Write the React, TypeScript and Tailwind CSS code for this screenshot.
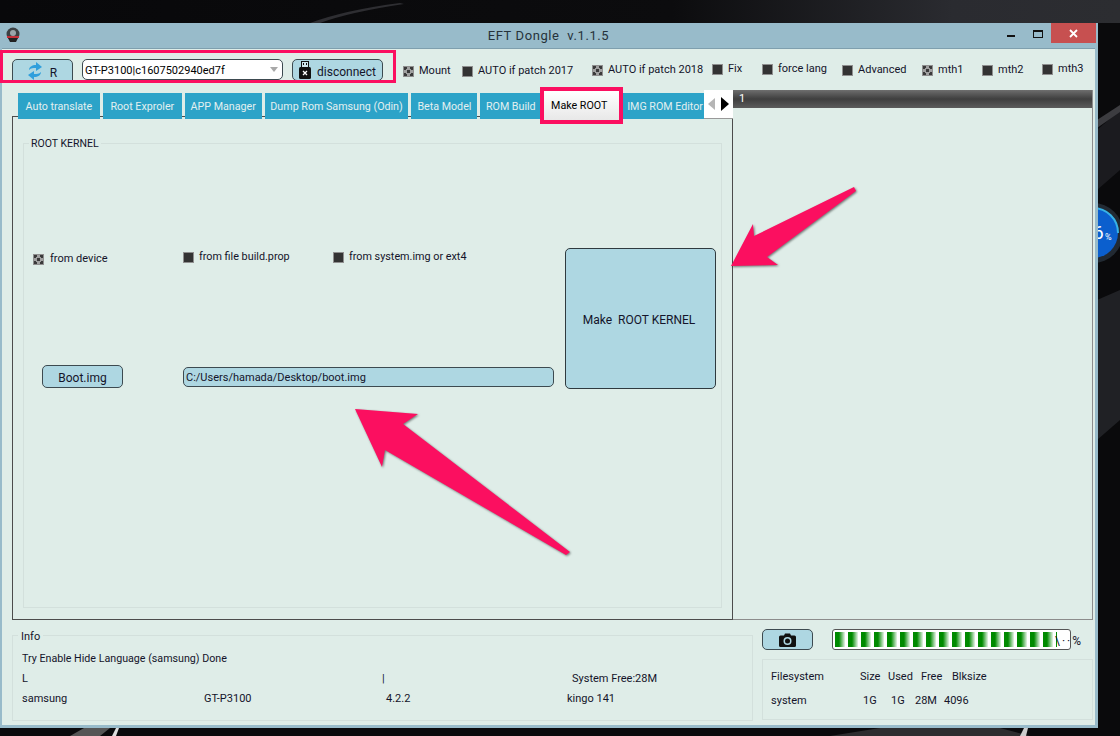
const font = "font-['Roboto','Liberation_Sans',Arial,sans-serif]"

const tabs = ['Auto translate', 'Root Exproler', 'APP Manager', 'Dump Rom Samsung (Odin)', 'Beta Model', 'ROM Build']
const tabWidths = ['w-[82px]', 'w-[79px]', 'w-[77px]', 'w-[144px]', 'w-[66px]', 'w-[61px]']

function Check({ label, checked, className }: { label: string; checked?: boolean; className: string }) {
  return (
    <div className={'flex items-center gap-[5px] ' + className}>
      <span className={'flex h-[11px] w-[11px] shrink-0 items-center justify-center border border-[#8f8f8f] ' + (checked ? 'bg-[#a0a0a0]' : 'bg-[#333333]')}>
        {checked && (
          <svg width="9" height="9" viewBox="0 0 9 9">
            <path d="M0 0h3v2H2v1H0zM6 0h3v3H7V2H6zM0 6h2v1h1v2H0zM9 6v3H6V7h1V6zM3 3h3v3H3z" fill="#3a3a3a" />
          </svg>
        )}
      </span>
      <span className="whitespace-nowrap">{label}</span>
    </div>
  )
}

function UsbIcon() {
  return (
    <svg width="12" height="18" viewBox="0 0 12 18" className="shrink-0">
      <rect x="2.5" y="0.5" width="7" height="6" fill="#cfe6ec" stroke="#111" />
      <path d="M4 2h1v2H4zM7 2h1v2H7z" fill="#111" />
      <rect x="0" y="6" width="12" height="12" rx="1.5" fill="#111" />
      <path d="M4 10l4 4M8 10l-4 4" stroke="#fff" strokeWidth="1.3" />
    </svg>
  )
}

function SyncIcon() {
  return (
    <svg width="14" height="18" viewBox="0 0 14 18" className="shrink-0">
      <path d="M1 8c0-3 3-5 7-5V0l6 5-6 4V6C5 6 3 6 1 8z" fill="#2f9fdc" />
      <path d="M13 10c0 3-3 5-7 5v3l-6-5 6-4v3c3 0 5 0 7-2z" fill="#2f9fdc" />
    </svg>
  )
}

function CameraIcon() {
  return (
    <svg width="17" height="14" viewBox="0 0 17 14">
      <path d="M1.5 2.5H5L6 .5h5l1 2h3.5A1.5 1.5 0 0 1 17 4v8.5a1.5 1.5 0 0 1-1.5 1.5h-14A1.5 1.5 0 0 1 0 12.500V4a1.500 1.500 0 0 1 1.500-1.500z" fill="#111" />
      <circle cx="8.500" cy="8" r="4" fill="#aed7e2" />
      <circle cx="8.500" cy="8" r="2.500" fill="#111" />
    </svg>
  )
}

export default function App() {
  return (
    <div className={'relative h-[736px] w-[1120px] overflow-hidden bg-[#0a0a0c] text-[11px] text-[#14142a] ' + font}>
      {/* desktop wallpaper */}
      <svg width="1120" height="736" className="absolute left-0 top-0">
        <defs>
          <linearGradient id="top" x1="0" x2="1" y1="0" y2="0">
            <stop offset="0" stopColor="#08080a" />
            <stop offset="0.6" stopColor="#0c0c0e" />
            <stop offset="0.85" stopColor="#2a2b30" />
            <stop offset="1" stopColor="#2c2d31" />
          </linearGradient>
        </defs>
        <rect width="1120" height="23" fill="url(#top)" />
        <path d="M310 23 Q345 10 400 3 L404 4 Q350 12 320 23z" fill="#2e2e32" />
        <path d="M1097 130 L1120 110 V170 L1097 190z" fill="#1b1b1f" />
        <path d="M1097 300 L1120 290 V420 L1097 440z" fill="#202125" />
        <path d="M1097 120 L1120 105 V112 L1097 128z" fill="#3c3c40" />
        <circle cx="1093" cy="233" r="30" fill="#222a33" />
        <circle cx="1093" cy="233" r="25" fill="#0b5fce" />
        <path d="M1093 208a25 25 0 0 1 25 25" fill="none" stroke="#37b2e6" strokeWidth="2" />
        <path d="M70 736 L84 728 H110 L100 736z" fill="#555" />
        <path d="M112 736 L116 728 H119 L116 736z" fill="#ddd" />
        <path d="M830 736 L880 728 H1000 L1030 736z" fill="#2d2d2f" />
        <path d="M1020 736 L1024 728 H1028 L1026 736z" fill="#ccc" />
      </svg>
      <span className="absolute left-[1093px] top-[222px] text-[19px] leading-[22px] text-white">6</span>
      <span className="absolute left-[1105px] top-[231px] text-[9px] leading-[12px] text-white">%</span>

      {/* window */}
      <div className="absolute left-0 top-[23px] flex h-[705px] w-[1098px] flex-col bg-[#98bbca] pb-[3px] pl-[2px] pr-[3px]">
        <div className="relative flex h-[25px] shrink-0 items-start justify-center">
          <svg width="14" height="16" viewBox="0 0 14 16" className="absolute left-[4px] top-[4px]">
            <circle cx="7" cy="7" r="6.5" fill="#3c4144" />
            <circle cx="7" cy="6" r="3" fill="#9aa5aa" />
            <rect x="1" y="9" width="12" height="2" fill="#c5303a" />
            <path d="M2 11h10l-2 4H4z" fill="#222" />
          </svg>
          <span className="mt-[3px] whitespace-pre text-[13px] tracking-[0.6px] text-[#26323a]">EFT Dongle  v.1.1.5</span>
          <div className="absolute right-[-1px] top-0 flex items-start">
            <span className="mr-[18px] mt-[12px] h-[2px] w-[8px] bg-[#111]" />
            <span className="mr-[8px] mt-[7px] h-[8px] w-[10px] border border-t-2 border-[#111]" />
            <span className="flex h-[20px] w-[45px] items-center justify-center bg-[#c75050]">
              <svg width="9" height="9" viewBox="0 0 9 9">
                <path d="M1 1l7 7M8 1l-7 7" stroke="#fff" strokeWidth="1.8" />
              </svg>
            </span>
          </div>
        </div>

        <div className="flex min-h-0 flex-1 flex-col border-t border-[#7f9fae] bg-[#dfede8]">
          {/* toolbar */}
          <div className="flex h-[39px] shrink-0 items-start pt-[1px]">
            <div className="ml-[-2px] flex h-[33px] w-[396px] items-start overflow-hidden border-[3px] border-[#fb0f60] pl-[9px] pt-[6px]">
              <button className="flex h-[26px] w-[61px] items-center justify-center gap-[8px] rounded-[5px] border border-[#3d4a50] bg-[#aed7e2] pb-[3px] text-[12px]">
                <SyncIcon />
                <span className="mt-[4px]">R</span>
              </button>
              <div className="ml-[9px] flex h-[21px] w-[201px] items-center justify-between rounded-[5px] border border-[#3d4a50] bg-white pl-[2px] pr-[3px]">
                <span className="mt-[3px] text-[11px] text-black">GT-P3100|c1607502940ed7f</span>
                <span className="mr-[1px] h-0 w-0 border-x-[4px] border-t-[5px] border-x-transparent border-t-[#a8a8a8]" />
              </div>
              <button className="ml-[9px] flex h-[22px] w-[91px] items-center justify-center gap-[6px] rounded-[5px] border border-[#3d4a50] bg-[#aed7e2] text-[12px]">
                <UsbIcon />
                <span className="mt-[3px]">disconnect</span>
              </button>
            </div>
            <div className="flex items-start text-[11px]">
              <Check label="Mount" checked className="ml-[7px] mt-[13px] w-[59px]" />
              <Check label="AUTO if patch 2017" className="mt-[13px] w-[130px]" />
              <Check label="AUTO if patch 2018" checked className="mt-[12px] w-[120px]" />
              <Check label="Fix" className="mt-[11px] w-[50px]" />
              <Check label="force lang" className="mt-[11px] w-[80px]" />
              <Check label="Advanced" className="mt-[12px] w-[80px]" />
              <Check label="mth1" checked className="mt-[12px] w-[60px]" />
              <Check label="mth2" className="mt-[12px] w-[60px]" />
              <Check label="mth3" className="mt-[11px]" />
            </div>
          </div>

          {/* main area */}
          <div className="flex h-[532px] shrink-0">
            <div className="relative w-[731px] shrink-0 pl-[10px]">
              <div className="ml-[6px] mt-[4px] flex h-[27px] items-end gap-[3px] text-[10.7px]">
                {tabs.map((t, i) => (
                  <div key={t} className={'flex h-[26px] items-center justify-center bg-[#2ca3c8] pt-[3px] text-[#e3f0f0] ' + tabWidths[i]}>
                    <span className="whitespace-nowrap">{t}</span>
                  </div>
                ))}
                <div className="relative z-10 mb-[-1px] flex h-[29px] w-[75px] items-center justify-center bg-gradient-to-b from-white to-[#e8e8e8] pr-[5px] pt-[1px] text-black outline outline-[4px] outline-[#fb0f60]">
                  Make ROOT
                </div>
                <div className="ml-[-1px] flex h-[26px] w-[83px] items-center whitespace-nowrap bg-[#2ca3c8] pl-[6px] pt-[3px] text-[#e3f0f0]">IMG ROM Editor</div>
                <div className="ml-[-3px] flex h-[29px] w-[29px] items-center border-b border-[#999] bg-white">
                  <span className="ml-[4px] h-0 w-0 border-y-[6px] border-r-[7px] border-y-transparent border-r-[#b5b5b5]" />
                  <span className="ml-[6px] h-0 w-0 border-y-[7px] border-l-[8px] border-y-transparent border-l-black" />
                </div>
              </div>
              <div className="mt-[-3px] h-[504px] border border-[#4c4c4c] px-[10px] pb-[12px] pt-[26px]">
                {/* ROOT KERNEL group */}
                <div className="relative flex h-[465px] flex-col border border-[#d3e0dc] pl-[9px]">
                  <span className="absolute left-[5px] top-[-5px] bg-[#dfede8] px-[2px] text-[10.5px] leading-none">ROOT KERNEL</span>
                  <div className="mt-[104px] flex h-[281px]">
                    <div className="flex w-[150px] shrink-0 flex-col">
                      <Check label="from device" checked className="mt-[3px] gap-[6px]" />
                      <button className="ml-[9px] mt-[97px] h-[23px] w-[81px] rounded-[5px] border border-[#3d4a50] bg-[#aed7e2] pt-[3px] text-[12px]">Boot.img</button>
                    </div>
                    <div className="flex w-[382px] shrink-0 flex-col">
                      <div className="mt-[1px] flex text-[10.8px]">
                        <Check label="from file build.prop" className="w-[150px]" />
                        <Check label="from system.img or ext4" />
                      </div>
                      <div className="mt-[102px] flex h-[20px] w-[371px] items-center rounded-[5px] border border-[#3d4a50] bg-[#aed7e2] pl-[2px] pt-[2px] text-[11px]">C:/Users/hamada/Desktop/boot.img</div>
                    </div>
                    <button className="h-[141px] w-[151px] shrink-0 rounded-[5px] border border-[#2f3a3f] bg-[#aed7e2] pr-[3px] pt-[2px] text-[12px]">Make&nbsp; ROOT KERNEL</button>
                  </div>
                </div>
              </div>
            </div>
            {/* log panel */}
            <div className="mt-[2px] flex h-[530px] w-[360px] flex-col border-b border-r border-[#8c8c8c]">
              <div className="h-[18px] bg-gradient-to-b from-[#6e6e6e] via-[#3f3f3f] to-[#5c5c5c] pl-[6px] text-[11px] leading-[18px] text-white">1</div>
            </div>
          </div>

          {/* bottom */}
          <div className="flex flex-1 pl-[10px]">
            <div className="relative mt-[15px] h-[86px] w-[741px] shrink-0 border border-[#d3e0dc] pl-[9px]">
              <span className="absolute left-[5px] top-[-5px] bg-[#dfede8] px-[3px] leading-none">Info</span>
              <div className="mt-[16px] text-[10.7px] leading-[13px]">Try Enable Hide Language (samsung) Done</div>
              <div className="mt-[7px] flex leading-[13px]">
                <span className="w-[360px]">L</span>
                <span className="w-[190px]">|</span>
                <span>System Free:28M</span>
              </div>
              <div className="mt-[7px] flex leading-[13px]">
                <span className="w-[182px]">samsung</span>
                <span className="w-[182px]">GT-P3100</span>
                <span className="w-[181px]">4.2.2</span>
                <span>kingo 141</span>
              </div>
            </div>
            <div className="ml-[9px] flex w-[331px] flex-col">
              <div className="flex items-start pt-[9px]">
                <button className="flex h-[21px] w-[51px] items-center justify-center rounded-[5px] border border-[#3d4a50] bg-[#aed7e2]">
                  <CameraIcon />
                </button>
                <div className="ml-[19px] h-[21px] w-[239px] rounded-[3px] border border-[#555] bg-white p-[2px]">
                  <div className="h-full w-[222px] bg-[repeating-linear-gradient(90deg,#008a00_0,#008a00_4px,#e8f4e8_10px,#ffffff_10px,#ffffff_13px)]" />
                </div>
                <span className="ml-[-16px] mt-[3px] whitespace-pre text-[12px] tracking-[2px]">{'\\··%'}</span>
              </div>
              <div className="mt-[9px] h-[61px] w-[331px] border border-[#d3e0dc] pl-[8px] pt-[10px]">
                <div className="flex leading-[13px]">
                  <span className="w-[89px]">Filesystem</span>
                  <span className="w-[28px]">Size</span>
                  <span className="w-[33px]">Used</span>
                  <span className="w-[31px]">Free</span>
                  <span>Blksize</span>
                </div>
                <div className="mt-[11px] flex leading-[13px]">
                  <span className="w-[92px]">system</span>
                  <span className="w-[28px]">1G</span>
                  <span className="w-[24px]">1G</span>
                  <span className="w-[29px]">28M</span>
                  <span>4096</span>
                </div>
              </div>
            </div>
          </div>
        </div>
      </div>

      {/* annotation arrows */}
      <svg width="1120" height="736" className="pointer-events-none absolute left-0 top-0 drop-shadow-[1px_1px_1px_rgba(0,0,0,0.5)]">
        <polygon points="731,266 753,224 754,236 854,187 856,191 767,257 778,265" fill="#fb0f60" />
        <polygon points="355,409 418,414 403,424 570,552 566,555 385,450 382,467" fill="#fb0f60" />
      </svg>
    </div>
  )
}
